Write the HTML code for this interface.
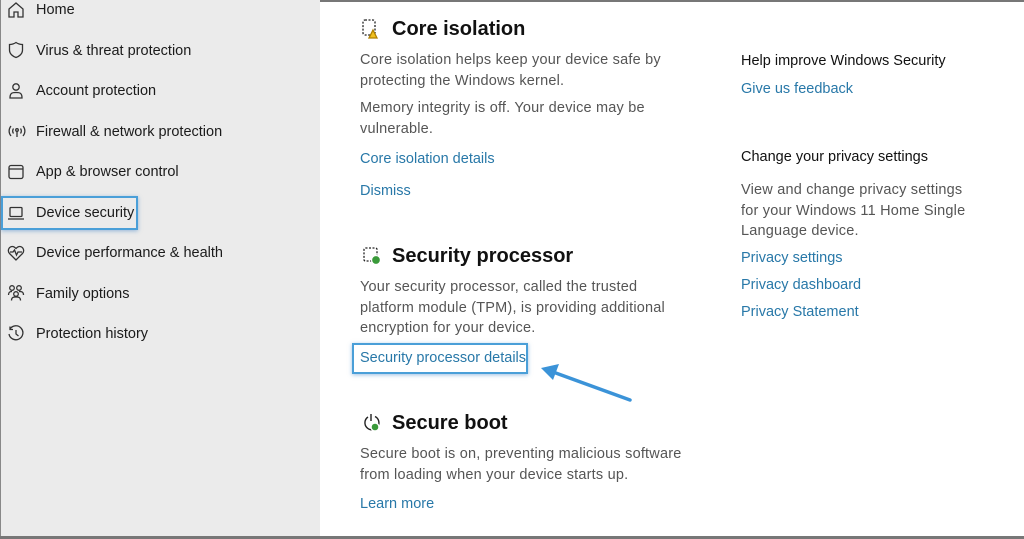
<!DOCTYPE html>
<html><head><meta charset="utf-8"><style>
*{margin:0;padding:0;box-sizing:border-box}
body{width:1024px;height:539px;overflow:hidden;background:#fff;font-family:"Liberation Sans",sans-serif;position:relative}
.side{position:absolute;left:0;top:0;width:320px;height:539px;background:#ebebeb;border-left:1px solid #888}
.topline{position:absolute;left:320px;top:0;width:704px;height:2px;background:#777}
.botline{position:absolute;left:0;top:536px;width:1024px;height:3px;background:#777}
.nav{position:absolute;left:36px;font-size:14.5px;color:#1b1b1b}
.ic{position:absolute;left:7px}
.t{position:absolute;font-size:14.5px;color:#555;line-height:20.5px;letter-spacing:.2px}
.h{position:absolute;font-size:20px;color:#111;font-weight:bold;left:392px}
.l{position:absolute;font-size:14.5px;color:#2878a8}
.box{position:absolute;border:2px solid #4a9fd8;box-shadow:0 1px 4px rgba(60,130,200,.5)}
</style></head><body>
<div class="side"></div>
<div class="topline"></div>
<div class="botline"></div>

<svg class="ic" style="top:1px" width="18" height="18" viewBox="0 0 18 18" fill="none" stroke="#333" stroke-width="1.3"><path d="M2 8 L9 2 L16 8 V16 H11 V11 H7 V16 H2 Z"/></svg>
<div class="nav" style="top:2px">Home</div>
<svg class="ic" style="top:41px" width="18" height="18" viewBox="0 0 18 18" fill="none" stroke="#333" stroke-width="1.3"><path d="M9 1.5 C6 3.5 4 3.5 2.5 3.5 V9 C2.5 13 6 15.5 9 16.5 C12 15.5 15.5 13 15.5 9 V3.5 C14 3.5 12 3.5 9 1.5Z"/></svg>
<div class="nav" style="top:43px">Virus &amp; threat protection</div>
<svg class="ic" style="top:82px" width="18" height="18" viewBox="0 0 18 18" fill="none" stroke="#333" stroke-width="1.3"><circle cx="9" cy="5" r="3.2"/><path d="M3 16 C3 11 5 10.5 9 10.5 C13 10.5 15 11 15 16 Z"/></svg>
<div class="nav" style="top:83px">Account protection</div>
<svg class="ic" style="top:122px" width="20" height="18" viewBox="0 0 20 18" fill="none" stroke="#333" stroke-width="1.3"><path d="M4 4 C1.5 7 1.5 11 4 14 M16 4 C18.5 7 18.5 11 16 14 M6.5 6.5 C5.5 8 5.5 10 6.5 11.5 M13.5 6.5 C14.5 8 14.5 10 13.5 11.5"/><circle cx="10" cy="8" r="1.3"/><path d="M10 9.5 V15"/></svg>
<div class="nav" style="top:124px">Firewall &amp; network protection</div>
<svg class="ic" style="top:163px" width="18" height="18" viewBox="0 0 18 18" fill="none" stroke="#333" stroke-width="1.3"><rect x="2" y="2.5" width="14" height="13" rx="2"/><path d="M2 6 H16"/></svg>
<div class="nav" style="top:164px">App &amp; browser control</div>
<div class="box" style="left:1px;top:196px;width:137px;height:34px"></div>
<svg class="ic" style="top:204px" width="18" height="18" viewBox="0 0 18 18" fill="none" stroke="#333" stroke-width="1.3"><rect x="3" y="3.5" width="12" height="9" rx="1"/><path d="M1 15 H17"/></svg>
<div class="nav" style="top:205px">Device security</div>
<svg class="ic" style="top:244px" width="18" height="18" viewBox="0 0 18 18" fill="none" stroke="#333" stroke-width="1.3"><path d="M9 16 L2.5 9.5 C0 6.5 2 2.5 5.5 2.5 C7 2.5 8 3.5 9 4.5 C10 3.5 11 2.5 12.5 2.5 C16 2.5 18 6.5 15.5 9.5 Z M3 8 H6 L7.5 6 L9.5 11 L11 8 H15"/></svg>
<div class="nav" style="top:245px">Device performance &amp; health</div>
<svg class="ic" style="top:284px" width="18" height="18" viewBox="0 0 18 18" fill="none" stroke="#333" stroke-width="1.3"><circle cx="5" cy="4" r="2.3"/><circle cx="12" cy="4" r="2.3"/><circle cx="9" cy="10" r="2.3"/><path d="M1.5 11 C1.5 8 3 7.5 5 7.5 M16.5 11 C16.5 8 15 7.5 12 7.5 M4.5 16.5 C4.5 13.5 6 13 9 13 C12 13 13.5 13.5 13.5 16.5"/></svg>
<div class="nav" style="top:286px">Family options</div>
<svg class="ic" style="top:325px" width="18" height="18" viewBox="0 0 18 18" fill="none" stroke="#333" stroke-width="1.3"><path d="M3 4 A7 7 0 1 1 2 9"/><path d="M3 1.5 V4.5 H6"/><path d="M9 5 V9 L11.5 11"/></svg>
<div class="nav" style="top:326px">Protection history</div>

<svg style="position:absolute;left:361px;top:18px" width="22" height="22" viewBox="0 0 22 22" fill="none" stroke="#222" stroke-width="1.3" stroke-dasharray="2 1.5"><rect x="2" y="2" width="12" height="15" rx="2"/><path d="M12 12 L16 20 H8 Z" fill="#f0c020" stroke="#b08000" stroke-dasharray="none"/></svg>
<div class="h" style="top:18px">Core isolation</div>
<div class="t" style="left:360px;top:50px">Core isolation helps keep your device safe by<br>protecting the Windows kernel.</div>
<div class="t" style="left:360px;top:98px">Memory integrity is off. Your device may be<br>vulnerable.</div>
<div class="l" style="left:360px;top:151px">Core isolation details</div>
<div class="l" style="left:360px;top:183px">Dismiss</div>

<svg style="position:absolute;left:361px;top:245px" width="22" height="22" viewBox="0 0 22 22" fill="none" stroke="#222" stroke-width="1.3"><rect x="3" y="3" width="13" height="13" rx="1.5" stroke-dasharray="2 1.5"/><circle cx="15" cy="15" r="4.5" fill="#3a9a3a" stroke="#fff"/></svg>
<div class="h" style="top:245px">Security processor</div>
<div class="t" style="left:360px;top:277px">Your security processor, called the trusted<br>platform module (TPM), is providing additional<br>encryption for your device.</div>
<div class="box" style="left:352px;top:343px;width:176px;height:31px"></div>
<div class="l" style="left:360px;top:350px">Security processor details</div>
<svg style="position:absolute;left:535px;top:360px" width="100" height="45" viewBox="0 0 100 45"><path d="M95 40 L18 12" stroke="#3b93d8" stroke-width="3.5" stroke-linecap="round"/><path d="M6 8 L24 4 L18 20 Z" fill="#3b93d8"/></svg>

<svg style="position:absolute;left:361px;top:412px" width="22" height="22" viewBox="0 0 22 22" fill="none" stroke="#222" stroke-width="1.4"><path d="M7 5 A7 7 0 1 0 14 4.5"/><path d="M10 2 V9"/><circle cx="14" cy="15" r="4" fill="#3a9a3a" stroke="#fff"/></svg>
<div class="h" style="top:412px">Secure boot</div>
<div class="t" style="left:360px;top:444px">Secure boot is on, preventing malicious software<br>from loading when your device starts up.</div>
<div class="l" style="left:360px;top:496px">Learn more</div>

<div style="position:absolute;left:741px;top:53px;font-size:14.5px;color:#111">Help improve Windows Security</div>
<div class="l" style="left:741px;top:81px">Give us feedback</div>
<div style="position:absolute;left:741px;top:149px;font-size:14.5px;color:#111">Change your privacy settings</div>
<div class="t" style="left:741px;top:180px">View and change privacy settings<br>for your Windows 11 Home Single<br>Language device.</div>
<div class="l" style="left:741px;top:250px">Privacy settings</div>
<div class="l" style="left:741px;top:277px">Privacy dashboard</div>
<div class="l" style="left:741px;top:304px">Privacy Statement</div>
</body></html>
